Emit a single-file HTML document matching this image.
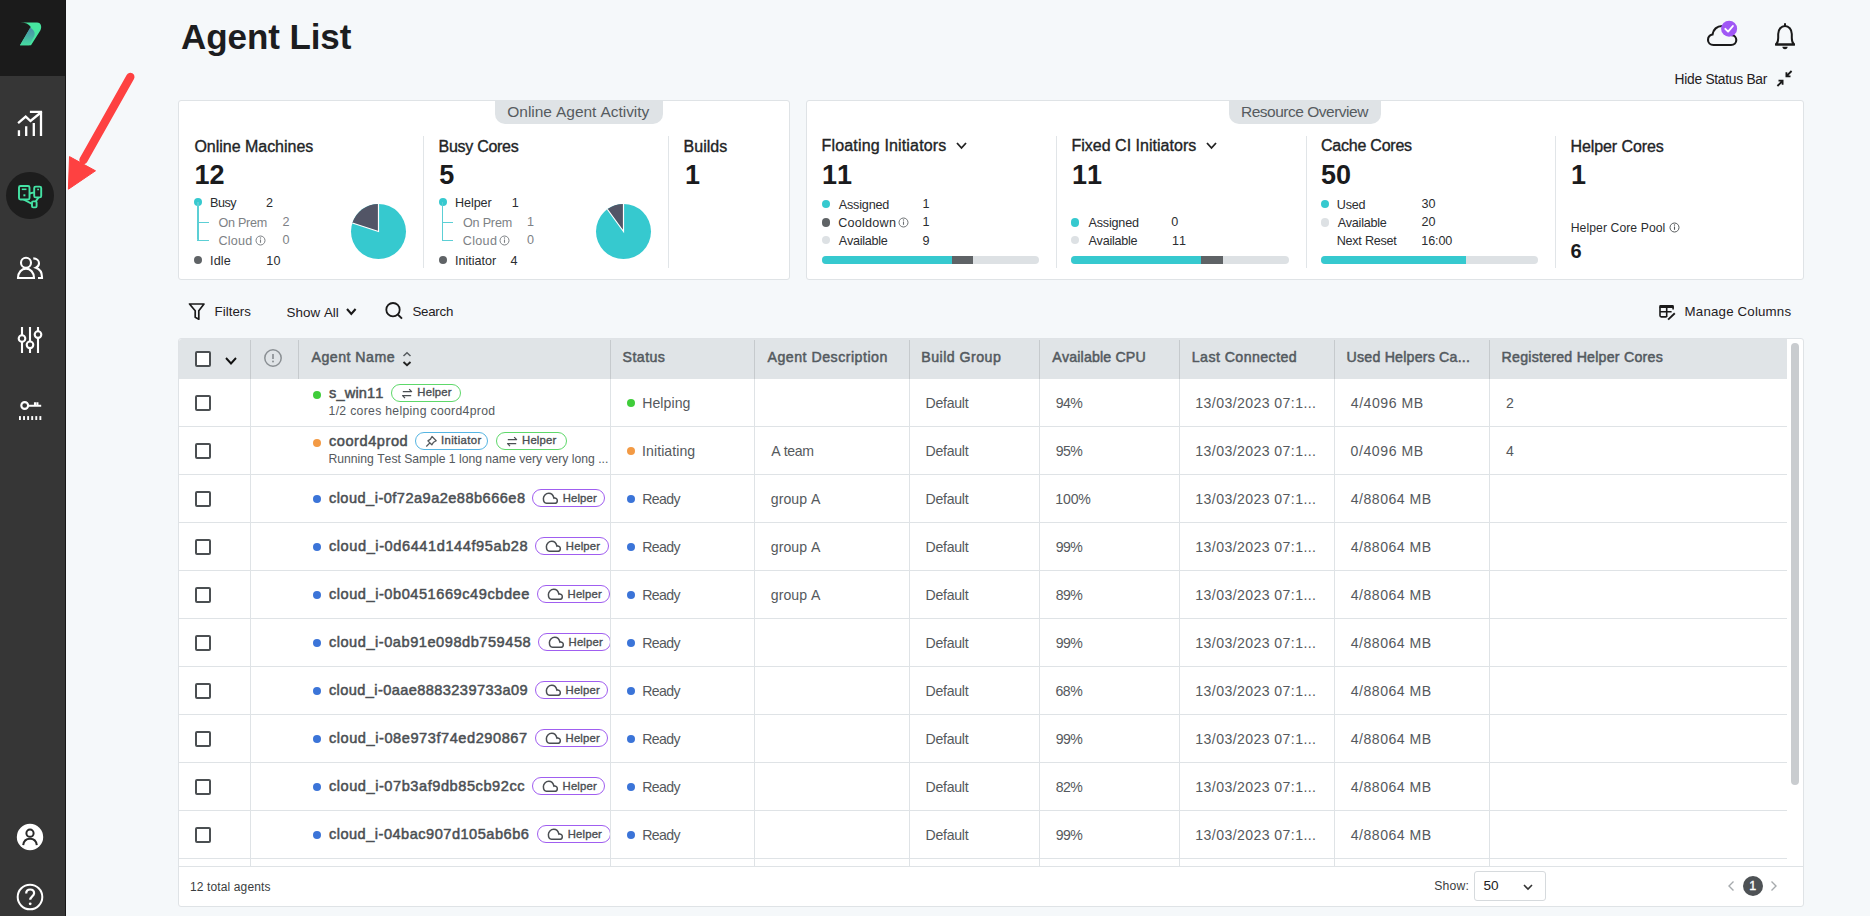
<!DOCTYPE html>
<html><head><meta charset="utf-8"><title>Agent List</title>
<style>
html,body{margin:0;padding:0;}
body{width:1870px;height:916px;position:relative;overflow:hidden;background:#f5f8fa;font-family:"Liberation Sans",sans-serif;}
.r{position:absolute;}
.med{-webkit-text-stroke:0.35px currentColor;}
.semi{-webkit-text-stroke:0.5px currentColor;}
.lt{}
.t{position:absolute;line-height:1;white-space:nowrap;font-kerning:none;font-variant-ligatures:none;}
svg.r{overflow:visible;}
</style></head><body>
<div class="r" style="left:0px;top:0px;width:66px;height:916px;background:#363636;"></div><div class="r" style="left:0px;top:0px;width:66px;height:76px;background:#1b1b1b;"></div><div class="r" style="left:65px;top:0px;width:1px;height:916px;background:#161616;"></div><svg class="r" style="left:17px;top:20px;" width="28" height="28" viewBox="0 0 28 28">
<defs><linearGradient id="lg" x1="0" y1="0" x2="0" y2="1">
<stop offset="0" stop-color="#4a8aa8"/><stop offset="0.5" stop-color="#47b0a5"/><stop offset="1" stop-color="#45dca0"/></linearGradient></defs>
<path d="M2.2 2.6 C8 2.4 11.5 3.6 13.8 7 L3 25.2 L14 25.2 L23.3 10.5 C25 7.8 24.5 2.6 20 2.6 Z" fill="#47e6a0"/>
<path d="M13.3 7.6 C16.8 10 18.6 13 17.2 16.2 L12.3 25.2 L3 25.2 Z" fill="url(#lg)"/>
</svg><svg class="r" style="left:15px;top:109px;" width="30" height="30" viewBox="0 0 30 30">
<g fill="none" stroke="#fff" stroke-width="2.3" stroke-linecap="butt" stroke-linejoin="miter">
<path d="M3.95 27 V21.2 M11.2 27 V17.3 M18.8 27 V14 M26 27 V2.9"/>
<path d="M3.1 14.2 L10.7 7.6 L15.5 12 L25.3 4 M14.9 2.9 H27.1"/>
</g></svg><div class="r" style="left:6.4px;top:171.6px;width:47.2px;height:47.2px;border-radius:50%;background:#1d1d1d;"></div><svg class="r" style="left:15px;top:182px;" width="30" height="30" viewBox="0 0 30 30">
<g fill="none" stroke="#45e3a5" stroke-width="1.9" stroke-linejoin="round">
<rect x="4" y="4" width="10.5" height="13.5" rx="1.5"/>
<rect x="19.2" y="4.6" width="7" height="10.8" rx="1.5"/>
<rect x="17" y="19.4" width="4.6" height="6" rx="1.2"/>
<path d="M14.5 11.5 L19.2 10.3 M8.5 17.5 L17 21.8 M23.5 15.4 L20.8 19.4"/>
<path d="M6.8 7.3 H11.5" stroke-width="1.6"/>
<path d="M22.2 7.6 H24" stroke-width="1.5"/>
</g>
<rect x="8.4" y="12.3" width="2" height="2" fill="#45e3a5"/>
</svg><svg class="r" style="left:15px;top:254px;" width="30" height="30" viewBox="0 0 30 30">
<g fill="none" stroke="#fff" stroke-width="2.1">
<circle cx="11" cy="8.8" r="5"/>
<path d="M3 24 C3 18.5 6.6 14.6 11 14.6 C15.4 14.6 19 18.5 19 24 Z"/>
<path d="M18.3 4.4 C21.5 4.4 24 6.3 24 9.2 C24 11.4 22.8 12.8 20.9 13.7 C24.6 15 27 18.6 27 23 V24 H23"/>
</g></svg><svg class="r" style="left:15px;top:325px;" width="30" height="30" viewBox="0 0 30 30">
<g fill="none" stroke="#fff" stroke-width="2.1">
<path d="M7 2 V10.2 M7 16.8 V28 M15 2 V16.5 M15 23.1 V28 M23 2 V6.3 M23 12.9 V28"/>
<circle cx="7" cy="13.5" r="3.3"/>
<circle cx="15" cy="19.8" r="3.3"/>
<circle cx="23" cy="9.6" r="3.3"/>
</g></svg><svg class="r" style="left:15px;top:398px;" width="30" height="26" viewBox="0 0 30 26">
<g fill="none" stroke="#fff" stroke-width="2.1">
<circle cx="9.7" cy="7.5" r="3.4"/>
<path d="M13 7.8 H26.2 M20 7.8 V4.3 M22.4 7.8 V4.3"/>
</g>
<g fill="#fff"><rect x="4.00" y="18.1" width="1.9" height="3.9"/><rect x="8.08" y="18.1" width="1.9" height="3.9"/><rect x="12.16" y="18.1" width="1.9" height="3.9"/><rect x="16.24" y="18.1" width="1.9" height="3.9"/><rect x="20.32" y="18.1" width="1.9" height="3.9"/><rect x="24.40" y="18.1" width="1.9" height="3.9"/></g></svg><svg class="r" style="left:15px;top:822px;" width="30" height="30" viewBox="0 0 30 30">
<circle cx="15" cy="15" r="13.2" fill="#fff"/>
<g fill="none" stroke="#2a2a2a" stroke-width="2">
<circle cx="15" cy="11.2" r="3.6"/>
<path d="M8.2 23.2 C8.7 19 11.5 16.8 15 16.8 C18.5 16.8 21.3 19 21.8 23.2"/>
</g></svg><svg class="r" style="left:15px;top:882px;" width="30" height="30" viewBox="0 0 30 30">
<circle cx="15" cy="15" r="12.3" fill="none" stroke="#fff" stroke-width="2"/>
<path d="M11.2 11.5 C11.2 9 13 7.5 15.2 7.5 C17.5 7.5 19.1 9 19.1 11.2 C19.1 14.2 15.2 14.5 15.2 17.8" fill="none" stroke="#fff" stroke-width="2.2"/>
<circle cx="15.2" cy="21.8" r="1.4" fill="#fff"/>
</svg><div class="r" style="left:66px;top:0px;width:1804px;height:916px;background:#f5f8fa;"></div><svg class="r" style="left:60px;top:70px;" width="80" height="130" viewBox="0 0 80 130">
<path d="M70.3 7 L23.5 90" stroke="#fe4141" stroke-width="8.4" stroke-linecap="round"/>
<path d="M8.4 119.2 L9.5 86.6 L35.5 100.8 Z" fill="#fe4141" stroke="#fe4141" stroke-width="1" stroke-linejoin="round"/>
</svg><div class="t " style="left:181.03px;top:18.67px;font-size:35px;color:#1c1d1f;font-weight:bold;letter-spacing:-0.078px;">Agent List</div><svg class="r" style="left:1700.8px;top:13.2px;" width="44" height="40" viewBox="0 0 44 40">
<path d="M12.5 32 H30 C33.2 32 35.3 29.8 35.3 27 C35.3 24.3 33.3 22.3 30.8 22.1 C30 16.8 26 13 21 13 C16 13 12.2 16.5 11.5 21.5 C8.8 22 7 24.3 7 27 C7 29.8 9.3 32 12.5 32 Z" fill="none" stroke="#1a1a1a" stroke-width="2.1"/>
<circle cx="28.1" cy="15.7" r="8" fill="#a057f5"/>
<path d="M24.3 15.8 L27.1 18.6 L31.9 13" fill="none" stroke="#fff" stroke-width="1.9" stroke-linecap="round" stroke-linejoin="round"/>
</svg><svg class="r" style="left:1772px;top:21px;" width="26" height="32" viewBox="0 0 26 32">
<path d="M4 23.5 C5.8 21.8 6.2 19.7 6.2 17 V13 C6.2 8.3 9.3 5 13 5 C16.7 5 19.8 8.3 19.8 13 V17 C19.8 19.7 20.2 21.8 22 23.5 Z" fill="none" stroke="#1a1a1a" stroke-width="2" stroke-linejoin="round"/>
<path d="M3 23.5 H23" stroke="#1a1a1a" stroke-width="2"/>
<path d="M13 2.2 V5" stroke="#1a1a1a" stroke-width="2"/>
<path d="M10.4 25.8 H15.6 A2.6 2.4 0 0 1 10.4 25.8 Z" fill="#1a1a1a"/>
</svg><div class="t " style="left:1674.57px;top:73.32px;font-size:13.8px;color:#1f2023;letter-spacing:-0.278px;">Hide Status Bar</div><svg class="r" style="left:1775px;top:69px;" width="20" height="20" viewBox="0 0 20 20">
<g fill="none" stroke="#1a1a1a" stroke-width="1.8">
<path d="M16.6 2 L11.6 7 M11.4 3.2 V7.3 H15.5"/>
<path d="M2.4 17 L7.4 12 M3.5 11.7 H7.6 V15.8"/>
</g></svg><div class="r" style="left:178px;top:100px;width:612px;height:180px;background:#fff;border:1px solid #dfe3e6;border-radius:3px;box-sizing:border-box;"></div><div class="r" style="left:806px;top:100px;width:998px;height:180px;background:#fff;border:1px solid #dfe3e6;border-radius:3px;box-sizing:border-box;"></div><div class="r" style="left:495px;top:100px;width:168px;height:24px;background:#dfe3e6;border-radius:0 0 10px 10px;"></div><div class="t " style="left:507.37px;top:104.48px;font-size:15.5px;color:#565b5f;letter-spacing:-0.057px;">Online Agent Activity</div><div class="r" style="left:1229px;top:100px;width:152px;height:24px;background:#dfe3e6;border-radius:0 0 10px 10px;"></div><div class="t " style="left:1241.03px;top:104.48px;font-size:15.5px;color:#565b5f;letter-spacing:-0.494px;">Resource Overview</div><div class="t med" style="left:194.44px;top:138.65px;font-size:16px;color:#222426;letter-spacing:-0.024px;">Online Machines</div><div class="t " style="left:194.50px;top:162.34px;font-size:27px;color:#1a1b1d;font-weight:bold;">12</div><div class="r" style="left:193.80px;top:198.00px;width:8.4px;height:8.4px;border-radius:50%;background:#36c9cf;"></div><div class="r" style="left:197.4px;top:202px;width:1.4px;height:39px;background:#5ccfd5;border-radius:0 0 0 2px;"></div><div class="r" style="left:197.4px;top:222px;width:11.3px;height:1.4px;background:#5ccfd5;"></div><div class="r" style="left:197.4px;top:239.8px;width:11.3px;height:1.4px;background:#5ccfd5;"></div><div class="t " style="left:210.07px;top:196.93px;font-size:12.6px;color:#2b2d30;letter-spacing:-0.518px;">Busy</div><div class="t " style="left:266.00px;top:196.53px;font-size:12.6px;color:#2b2d30;">2</div><div class="t " style="left:218.60px;top:216.63px;font-size:12.6px;color:#7d8185;letter-spacing:-0.297px;">On Prem</div><div class="t " style="left:282.40px;top:216.33px;font-size:12.6px;color:#7d8185;">2</div><div class="t " style="left:218.56px;top:234.63px;font-size:12.6px;color:#7d8185;letter-spacing:0.208px;">Cloud</div><svg class="r" style="left:254.5px;top:234.5px;" width="11" height="11" viewBox="0 0 11 11"><circle cx="5.5" cy="5.5" r="4.5" fill="none" stroke="#7d8185" stroke-width="1"/>
<path d="M5.5 4.5 V7.800000000000001" stroke="#7d8185" stroke-width="1.1"/><circle cx="5.5" cy="3.0" r="0.7" fill="#7d8185"/></svg><div class="t " style="left:282.40px;top:234.33px;font-size:12.6px;color:#7d8185;">0</div><div class="r" style="left:193.80px;top:256.10px;width:8.4px;height:8.4px;border-radius:50%;background:#5f6366;"></div><div class="t " style="left:209.94px;top:254.93px;font-size:12.6px;color:#2b2d30;letter-spacing:0.203px;">Idle</div><div class="t " style="left:266.24px;top:254.53px;font-size:12.6px;color:#2b2d30;letter-spacing:0.137px;">10</div><div class="r" style="left:423px;top:136px;width:1px;height:132px;background:#e1e5e8;"></div><svg class="r" style="left:349.0px;top:201.8px;" width="59.0" height="59.0" viewBox="0 0 59.0 59.0">
<g transform="translate(-349.0,-201.8)">
<circle cx="378.5" cy="231.3" r="27.5" fill="#36c9cf"/>
<path d="M378.5 231.3 L378.5 203.8 A27.5 27.5 0 0 0 352.35 222.80 Z" fill="#525566"/>
<path d="M352.35 222.80 L378.5 231.3 L378.5 203.8" fill="none" stroke="#fff" stroke-width="1.2"/>
</g></svg><div class="t med" style="left:438.59px;top:138.65px;font-size:16px;color:#222426;letter-spacing:-0.289px;">Busy Cores</div><div class="t " style="left:439.20px;top:162.34px;font-size:27px;color:#1a1b1d;font-weight:bold;">5</div><div class="r" style="left:438.50px;top:198.00px;width:8.4px;height:8.4px;border-radius:50%;background:#36c9cf;"></div><div class="r" style="left:442.1px;top:202px;width:1.4px;height:39px;background:#5ccfd5;border-radius:0 0 0 2px;"></div><div class="r" style="left:442.1px;top:222px;width:11.3px;height:1.4px;background:#5ccfd5;"></div><div class="r" style="left:442.1px;top:239.8px;width:11.3px;height:1.4px;background:#5ccfd5;"></div><div class="t " style="left:455.07px;top:196.93px;font-size:12.6px;color:#2b2d30;letter-spacing:-0.095px;">Helper</div><div class="t " style="left:511.70px;top:196.53px;font-size:12.6px;color:#2b2d30;">1</div><div class="t " style="left:462.90px;top:216.63px;font-size:12.6px;color:#7d8185;letter-spacing:-0.181px;">On Prem</div><div class="t " style="left:527.00px;top:216.33px;font-size:12.6px;color:#7d8185;">1</div><div class="t " style="left:462.86px;top:234.63px;font-size:12.6px;color:#7d8185;letter-spacing:0.283px;">Cloud</div><svg class="r" style="left:499.2px;top:234.5px;" width="11" height="11" viewBox="0 0 11 11"><circle cx="5.5" cy="5.5" r="4.5" fill="none" stroke="#7d8185" stroke-width="1"/>
<path d="M5.5 4.5 V7.800000000000001" stroke="#7d8185" stroke-width="1.1"/><circle cx="5.5" cy="3.0" r="0.7" fill="#7d8185"/></svg><div class="t " style="left:527.00px;top:234.33px;font-size:12.6px;color:#7d8185;">0</div><div class="r" style="left:438.50px;top:256.10px;width:8.4px;height:8.4px;border-radius:50%;background:#5f6366;"></div><div class="t " style="left:454.94px;top:254.93px;font-size:12.6px;color:#2b2d30;letter-spacing:0.007px;">Initiator</div><div class="t " style="left:510.60px;top:254.53px;font-size:12.6px;color:#2b2d30;">4</div><div class="r" style="left:668px;top:136px;width:1px;height:132px;background:#e1e5e8;"></div><svg class="r" style="left:593.6px;top:201.8px;" width="59.0" height="59.0" viewBox="0 0 59.0 59.0">
<g transform="translate(-593.6,-201.8)">
<circle cx="623.1" cy="231.3" r="27.5" fill="#36c9cf"/>
<path d="M623.1 231.3 L623.1 203.8 A27.5 27.5 0 0 0 606.94 209.05 Z" fill="#525566"/>
<path d="M606.94 209.05 L623.1 231.3 L623.1 203.8" fill="none" stroke="#fff" stroke-width="1.2"/>
</g></svg><div class="t med" style="left:683.59px;top:138.65px;font-size:16px;color:#222426;letter-spacing:0.022px;">Builds</div><div class="t " style="left:685.00px;top:162.34px;font-size:27px;color:#1a1b1d;font-weight:bold;">1</div><div class="t med" style="left:821.59px;top:138.15px;font-size:16px;color:#222426;letter-spacing:0.159px;">Floating Initiators</div><svg class="r" style="left:956px;top:142px;" width="11" height="8" viewBox="0 0 11 8"><path d="M1 1 L5.5 6 L10 1" fill="none" stroke="#222" stroke-width="1.8"/></svg><div class="t " style="left:822.00px;top:162.34px;font-size:27px;color:#1a1b1d;font-weight:bold;">11</div><div class="r" style="left:821.70px;top:199.80px;width:8.4px;height:8.4px;border-radius:50%;background:#36c9cf;"></div><div class="t " style="left:838.78px;top:198.53px;font-size:12.6px;color:#2b2d30;letter-spacing:-0.185px;">Assigned</div><div class="t " style="left:922.40px;top:198.13px;font-size:12.6px;color:#2b2d30;">1</div><div class="r" style="left:821.70px;top:218.20px;width:8.4px;height:8.4px;border-radius:50%;background:#5f6366;"></div><div class="t " style="left:838.16px;top:216.73px;font-size:12.6px;color:#2b2d30;letter-spacing:0.246px;">Cooldown</div><svg class="r" style="left:898.4px;top:216.8px;" width="11" height="11" viewBox="0 0 11 11"><circle cx="5.5" cy="5.5" r="4.5" fill="none" stroke="#6e7275" stroke-width="1"/>
<path d="M5.5 4.5 V7.800000000000001" stroke="#6e7275" stroke-width="1.1"/><circle cx="5.5" cy="3.0" r="0.7" fill="#6e7275"/></svg><div class="t " style="left:922.40px;top:216.33px;font-size:12.6px;color:#2b2d30;">1</div><div class="r" style="left:821.70px;top:236.00px;width:8.4px;height:8.4px;border-radius:50%;background:#dde1e4;"></div><div class="t " style="left:838.78px;top:234.93px;font-size:12.6px;color:#2b2d30;letter-spacing:-0.256px;">Available</div><div class="t " style="left:922.40px;top:234.53px;font-size:12.6px;color:#2b2d30;">9</div><div class="r" style="left:821.7px;top:256.3px;width:217.5px;height:8px;border-radius:4px;overflow:hidden;background:#dde1e4;"><div style="position:absolute;left:0.0px;top:0;width:130.0999999999999px;height:100%;background:#36c9cf;"></div><div style="position:absolute;left:130.0999999999999px;top:0;width:21.200000000000045px;height:100%;background:#5f6366;"></div></div><div class="r" style="left:1055.8px;top:136px;width:1px;height:132px;background:#e1e5e8;"></div><div class="t med" style="left:1071.39px;top:138.15px;font-size:16px;color:#222426;letter-spacing:0.023px;">Fixed CI Initiators</div><svg class="r" style="left:1205.5px;top:142px;" width="11" height="8" viewBox="0 0 11 8"><path d="M1 1 L5.5 6 L10 1" fill="none" stroke="#222" stroke-width="1.8"/></svg><div class="t " style="left:1072.00px;top:162.34px;font-size:27px;color:#1a1b1d;font-weight:bold;">11</div><div class="r" style="left:1071.10px;top:218.20px;width:8.4px;height:8.4px;border-radius:50%;background:#36c9cf;"></div><div class="t " style="left:1088.48px;top:216.73px;font-size:12.6px;color:#2b2d30;letter-spacing:-0.185px;">Assigned</div><div class="t " style="left:1171.20px;top:216.33px;font-size:12.6px;color:#2b2d30;">0</div><div class="r" style="left:1071.10px;top:236.00px;width:8.4px;height:8.4px;border-radius:50%;background:#dde1e4;"></div><div class="t " style="left:1088.48px;top:234.93px;font-size:12.6px;color:#2b2d30;letter-spacing:-0.256px;">Available</div><div class="t " style="left:1172.00px;top:234.53px;font-size:12.6px;color:#2b2d30;">11</div><div class="r" style="left:1071.1px;top:256.3px;width:217.5px;height:8px;border-radius:4px;overflow:hidden;background:#dde1e4;"><div style="position:absolute;left:0.0px;top:0;width:130.20000000000005px;height:100%;background:#36c9cf;"></div><div style="position:absolute;left:130.20000000000005px;top:0;width:21.90000000000009px;height:100%;background:#5f6366;"></div></div><div class="r" style="left:1305.6px;top:136px;width:1px;height:132px;background:#e1e5e8;"></div><div class="t med" style="left:1320.99px;top:138.15px;font-size:16px;color:#222426;letter-spacing:-0.228px;">Cache Cores</div><div class="t " style="left:1321.00px;top:162.34px;font-size:27px;color:#1a1b1d;font-weight:bold;">50</div><div class="r" style="left:1320.80px;top:199.80px;width:8.4px;height:8.4px;border-radius:50%;background:#36c9cf;"></div><div class="t " style="left:1336.73px;top:198.53px;font-size:12.6px;color:#2b2d30;letter-spacing:-0.177px;">Used</div><div class="t " style="left:1421.50px;top:198.13px;font-size:12.6px;color:#2b2d30;">30</div><div class="r" style="left:1320.80px;top:218.20px;width:8.4px;height:8.4px;border-radius:50%;background:#dde1e4;"></div><div class="t " style="left:1337.68px;top:216.73px;font-size:12.6px;color:#2b2d30;letter-spacing:-0.256px;">Available</div><div class="t " style="left:1421.50px;top:216.33px;font-size:12.6px;color:#2b2d30;">20</div><div class="t " style="left:1336.67px;top:234.93px;font-size:12.6px;color:#2b2d30;letter-spacing:-0.233px;">Next Reset</div><div class="t " style="left:1421.24px;top:234.53px;font-size:12.6px;color:#2b2d30;letter-spacing:-0.095px;">16:00</div><div class="r" style="left:1320.9px;top:256.3px;width:216.89999999999986px;height:8px;border-radius:4px;overflow:hidden;background:#dde1e4;"><div style="position:absolute;left:0.0px;top:0;width:145.0999999999999px;height:100%;background:#36c9cf;"></div></div><div class="r" style="left:1554.7px;top:136px;width:1px;height:132px;background:#e1e5e8;"></div><div class="t med" style="left:1570.49px;top:139.05px;font-size:16px;color:#222426;letter-spacing:-0.088px;">Helper Cores</div><div class="t " style="left:1571.00px;top:162.34px;font-size:27px;color:#1a1b1d;font-weight:bold;">1</div><div class="t " style="left:1570.70px;top:222.07px;font-size:12.2px;color:#2b2d30;letter-spacing:0.076px;">Helper Core Pool</div><svg class="r" style="left:1669px;top:222.3px;" width="11" height="11" viewBox="0 0 11 11"><circle cx="5.5" cy="5.5" r="4.5" fill="none" stroke="#55595c" stroke-width="1"/>
<path d="M5.5 4.5 V7.800000000000001" stroke="#55595c" stroke-width="1.1"/><circle cx="5.5" cy="3.0" r="0.7" fill="#55595c"/></svg><div class="t " style="left:1570.50px;top:240.77px;font-size:20px;color:#1a1b1d;font-weight:bold;">6</div><svg class="r" style="left:187px;top:301px;" width="20" height="21" viewBox="0 0 20 21"><path d="M2.5 3 H17 L11.8 9.8 V18.2 L8.2 16.3 V9.8 Z" fill="none" stroke="#1a1a1a" stroke-width="1.7" stroke-linejoin="round"/></svg><div class="t " style="left:214.61px;top:305.04px;font-size:13.3px;color:#1f2023;letter-spacing:0.011px;">Filters</div><div class="t " style="left:286.59px;top:306.15px;font-size:13.4px;color:#1f2023;letter-spacing:0.024px;">Show All</div><svg class="r" style="left:346.3px;top:307.8px;" width="10.6" height="8" viewBox="0 0 10.6 8"><path d="M1 1 L5.3 6 L9.6 1" fill="none" stroke="#1a1a1a" stroke-width="2.1"/></svg><svg class="r" style="left:383px;top:301px;" width="22" height="22" viewBox="0 0 22 22"><circle cx="10" cy="8.7" r="6.7" fill="none" stroke="#1a1a1a" stroke-width="1.8"/><path d="M14.8 13.5 L19 17.7" stroke="#1a1a1a" stroke-width="1.9"/></svg><div class="t " style="left:412.40px;top:305.04px;font-size:13.3px;color:#1f2023;letter-spacing:-0.235px;">Search</div><svg class="r" style="left:1656px;top:302px;" width="22" height="20" viewBox="0 0 22 20">
<g fill="none" stroke="#1a1a1a" stroke-width="1.6">
<path d="M10.7 14.9 H5.3 Q4 14.9 4 13.6 V5 M17.1 5 V7.6 M4 9.8 H15.6 M10.7 5.5 V14.9"/>
</g>
<rect x="3.2" y="3.1" width="14.7" height="2.9" rx="1.2" fill="#1a1a1a"/>
<path d="M18.8 11.3 L12.1 17.6" stroke="#1a1a1a" stroke-width="1.9"/>
</svg><div class="t " style="left:1684.61px;top:305.04px;font-size:13.3px;color:#1f2023;letter-spacing:0.172px;">Manage Columns</div><div class="r" style="left:178px;top:338px;width:1626px;height:569px;background:#fff;border:1px solid #dfe3e6;border-radius:3px;box-sizing:border-box;"></div><div class="r" style="left:179px;top:339px;width:1608px;height:40px;background:#e0e4e7;border-radius:3px 0 0 0;"></div><div class="r" style="left:250px;top:340px;width:1px;height:39px;background:#c6cacd;"></div><div class="r" style="left:298px;top:340px;width:1px;height:39px;background:#c6cacd;"></div><div class="r" style="left:610px;top:340px;width:1px;height:39px;background:#c6cacd;"></div><div class="r" style="left:754px;top:340px;width:1px;height:39px;background:#c6cacd;"></div><div class="r" style="left:909px;top:340px;width:1px;height:39px;background:#c6cacd;"></div><div class="r" style="left:1039px;top:340px;width:1px;height:39px;background:#c6cacd;"></div><div class="r" style="left:1179px;top:340px;width:1px;height:39px;background:#c6cacd;"></div><div class="r" style="left:1334px;top:340px;width:1px;height:39px;background:#c6cacd;"></div><div class="r" style="left:1489px;top:340px;width:1px;height:39px;background:#c6cacd;"></div><div class="r" style="left:195.3px;top:351.2px;width:15.5px;height:15.5px;border:2px solid #4b4f52;border-radius:2px;box-sizing:border-box;background:#fff;"></div><svg class="r" style="left:224.5px;top:356.5px;" width="12" height="8.5" viewBox="0 0 12 8.5"><path d="M1 1 L6.0 6.5 L11 1" fill="none" stroke="#111" stroke-width="1.9"/></svg><svg class="r" style="left:263px;top:349px;" width="21" height="19" viewBox="0 0 21 19"><circle cx="10" cy="9" r="8.2" fill="none" stroke="#8b9094" stroke-width="1.5"/><path d="M10 5 V10" stroke="#8b9094" stroke-width="1.7"/><circle cx="10" cy="12.6" r="1" fill="#8b9094"/></svg><div class="t semi" style="left:311.47px;top:350.48px;font-size:14.2px;color:#545a5f;letter-spacing:0.481px;">Agent Name</div><svg class="r" style="left:400px;top:350px;" width="14" height="18" viewBox="0 0 14 18"><path d="M3.5 6 L7 2.8 L10.5 6" fill="none" stroke="#555a5e" stroke-width="1.5"/><path d="M3.5 12 L7 15.2 L10.5 12" fill="none" stroke="#222" stroke-width="1.9"/></svg><div class="t semi" style="left:622.56px;top:350.28px;font-size:14.2px;color:#545a5f;letter-spacing:0.44px;">Status</div><div class="t semi" style="left:767.47px;top:350.28px;font-size:14.2px;color:#545a5f;letter-spacing:0.492px;">Agent Description</div><div class="t semi" style="left:921.34px;top:350.28px;font-size:14.2px;color:#545a5f;letter-spacing:0.457px;">Build Group</div><div class="t semi" style="left:1052.37px;top:350.28px;font-size:14.2px;color:#545a5f;letter-spacing:0.156px;">Available CPU</div><div class="t semi" style="left:1191.74px;top:350.28px;font-size:14.2px;color:#545a5f;letter-spacing:0.432px;">Last Connected</div><div class="t semi" style="left:1346.60px;top:350.28px;font-size:14.2px;color:#545a5f;letter-spacing:0.202px;">Used Helpers Ca...</div><div class="t semi" style="left:1501.54px;top:350.28px;font-size:14.2px;color:#545a5f;letter-spacing:0.232px;">Registered Helper Cores</div><div class="r" style="left:1791px;top:343px;width:8px;height:442px;background:#c9cccf;border-radius:4px;"></div><div class="r" style="left:179px;top:379px;width:1608px;height:487px;overflow:hidden;"><div class="r" style="left:0px;top:47px;width:1608px;height:1px;background:#dfe3e6;"></div><div class="r" style="left:71px;top:0px;width:1px;height:47px;background:#dfe3e6;"></div><div class="r" style="left:431px;top:0px;width:1px;height:47px;background:#dfe3e6;"></div><div class="r" style="left:575px;top:0px;width:1px;height:47px;background:#dfe3e6;"></div><div class="r" style="left:730px;top:0px;width:1px;height:47px;background:#dfe3e6;"></div><div class="r" style="left:860px;top:0px;width:1px;height:47px;background:#dfe3e6;"></div><div class="r" style="left:1000px;top:0px;width:1px;height:47px;background:#dfe3e6;"></div><div class="r" style="left:1155px;top:0px;width:1px;height:47px;background:#dfe3e6;"></div><div class="r" style="left:1310px;top:0px;width:1px;height:47px;background:#dfe3e6;"></div><div class="r" style="left:0px;top:95px;width:1608px;height:1px;background:#dfe3e6;"></div><div class="r" style="left:71px;top:48px;width:1px;height:47px;background:#dfe3e6;"></div><div class="r" style="left:431px;top:48px;width:1px;height:47px;background:#dfe3e6;"></div><div class="r" style="left:575px;top:48px;width:1px;height:47px;background:#dfe3e6;"></div><div class="r" style="left:730px;top:48px;width:1px;height:47px;background:#dfe3e6;"></div><div class="r" style="left:860px;top:48px;width:1px;height:47px;background:#dfe3e6;"></div><div class="r" style="left:1000px;top:48px;width:1px;height:47px;background:#dfe3e6;"></div><div class="r" style="left:1155px;top:48px;width:1px;height:47px;background:#dfe3e6;"></div><div class="r" style="left:1310px;top:48px;width:1px;height:47px;background:#dfe3e6;"></div><div class="r" style="left:0px;top:143px;width:1608px;height:1px;background:#dfe3e6;"></div><div class="r" style="left:71px;top:96px;width:1px;height:47px;background:#dfe3e6;"></div><div class="r" style="left:431px;top:96px;width:1px;height:47px;background:#dfe3e6;"></div><div class="r" style="left:575px;top:96px;width:1px;height:47px;background:#dfe3e6;"></div><div class="r" style="left:730px;top:96px;width:1px;height:47px;background:#dfe3e6;"></div><div class="r" style="left:860px;top:96px;width:1px;height:47px;background:#dfe3e6;"></div><div class="r" style="left:1000px;top:96px;width:1px;height:47px;background:#dfe3e6;"></div><div class="r" style="left:1155px;top:96px;width:1px;height:47px;background:#dfe3e6;"></div><div class="r" style="left:1310px;top:96px;width:1px;height:47px;background:#dfe3e6;"></div><div class="r" style="left:0px;top:191px;width:1608px;height:1px;background:#dfe3e6;"></div><div class="r" style="left:71px;top:144px;width:1px;height:47px;background:#dfe3e6;"></div><div class="r" style="left:431px;top:144px;width:1px;height:47px;background:#dfe3e6;"></div><div class="r" style="left:575px;top:144px;width:1px;height:47px;background:#dfe3e6;"></div><div class="r" style="left:730px;top:144px;width:1px;height:47px;background:#dfe3e6;"></div><div class="r" style="left:860px;top:144px;width:1px;height:47px;background:#dfe3e6;"></div><div class="r" style="left:1000px;top:144px;width:1px;height:47px;background:#dfe3e6;"></div><div class="r" style="left:1155px;top:144px;width:1px;height:47px;background:#dfe3e6;"></div><div class="r" style="left:1310px;top:144px;width:1px;height:47px;background:#dfe3e6;"></div><div class="r" style="left:0px;top:239px;width:1608px;height:1px;background:#dfe3e6;"></div><div class="r" style="left:71px;top:192px;width:1px;height:47px;background:#dfe3e6;"></div><div class="r" style="left:431px;top:192px;width:1px;height:47px;background:#dfe3e6;"></div><div class="r" style="left:575px;top:192px;width:1px;height:47px;background:#dfe3e6;"></div><div class="r" style="left:730px;top:192px;width:1px;height:47px;background:#dfe3e6;"></div><div class="r" style="left:860px;top:192px;width:1px;height:47px;background:#dfe3e6;"></div><div class="r" style="left:1000px;top:192px;width:1px;height:47px;background:#dfe3e6;"></div><div class="r" style="left:1155px;top:192px;width:1px;height:47px;background:#dfe3e6;"></div><div class="r" style="left:1310px;top:192px;width:1px;height:47px;background:#dfe3e6;"></div><div class="r" style="left:0px;top:287px;width:1608px;height:1px;background:#dfe3e6;"></div><div class="r" style="left:71px;top:240px;width:1px;height:47px;background:#dfe3e6;"></div><div class="r" style="left:431px;top:240px;width:1px;height:47px;background:#dfe3e6;"></div><div class="r" style="left:575px;top:240px;width:1px;height:47px;background:#dfe3e6;"></div><div class="r" style="left:730px;top:240px;width:1px;height:47px;background:#dfe3e6;"></div><div class="r" style="left:860px;top:240px;width:1px;height:47px;background:#dfe3e6;"></div><div class="r" style="left:1000px;top:240px;width:1px;height:47px;background:#dfe3e6;"></div><div class="r" style="left:1155px;top:240px;width:1px;height:47px;background:#dfe3e6;"></div><div class="r" style="left:1310px;top:240px;width:1px;height:47px;background:#dfe3e6;"></div><div class="r" style="left:0px;top:335px;width:1608px;height:1px;background:#dfe3e6;"></div><div class="r" style="left:71px;top:288px;width:1px;height:47px;background:#dfe3e6;"></div><div class="r" style="left:431px;top:288px;width:1px;height:47px;background:#dfe3e6;"></div><div class="r" style="left:575px;top:288px;width:1px;height:47px;background:#dfe3e6;"></div><div class="r" style="left:730px;top:288px;width:1px;height:47px;background:#dfe3e6;"></div><div class="r" style="left:860px;top:288px;width:1px;height:47px;background:#dfe3e6;"></div><div class="r" style="left:1000px;top:288px;width:1px;height:47px;background:#dfe3e6;"></div><div class="r" style="left:1155px;top:288px;width:1px;height:47px;background:#dfe3e6;"></div><div class="r" style="left:1310px;top:288px;width:1px;height:47px;background:#dfe3e6;"></div><div class="r" style="left:0px;top:383px;width:1608px;height:1px;background:#dfe3e6;"></div><div class="r" style="left:71px;top:336px;width:1px;height:47px;background:#dfe3e6;"></div><div class="r" style="left:431px;top:336px;width:1px;height:47px;background:#dfe3e6;"></div><div class="r" style="left:575px;top:336px;width:1px;height:47px;background:#dfe3e6;"></div><div class="r" style="left:730px;top:336px;width:1px;height:47px;background:#dfe3e6;"></div><div class="r" style="left:860px;top:336px;width:1px;height:47px;background:#dfe3e6;"></div><div class="r" style="left:1000px;top:336px;width:1px;height:47px;background:#dfe3e6;"></div><div class="r" style="left:1155px;top:336px;width:1px;height:47px;background:#dfe3e6;"></div><div class="r" style="left:1310px;top:336px;width:1px;height:47px;background:#dfe3e6;"></div><div class="r" style="left:0px;top:431px;width:1608px;height:1px;background:#dfe3e6;"></div><div class="r" style="left:71px;top:384px;width:1px;height:47px;background:#dfe3e6;"></div><div class="r" style="left:431px;top:384px;width:1px;height:47px;background:#dfe3e6;"></div><div class="r" style="left:575px;top:384px;width:1px;height:47px;background:#dfe3e6;"></div><div class="r" style="left:730px;top:384px;width:1px;height:47px;background:#dfe3e6;"></div><div class="r" style="left:860px;top:384px;width:1px;height:47px;background:#dfe3e6;"></div><div class="r" style="left:1000px;top:384px;width:1px;height:47px;background:#dfe3e6;"></div><div class="r" style="left:1155px;top:384px;width:1px;height:47px;background:#dfe3e6;"></div><div class="r" style="left:1310px;top:384px;width:1px;height:47px;background:#dfe3e6;"></div><div class="r" style="left:0px;top:479px;width:1608px;height:1px;background:#dfe3e6;"></div><div class="r" style="left:71px;top:432px;width:1px;height:47px;background:#dfe3e6;"></div><div class="r" style="left:431px;top:432px;width:1px;height:47px;background:#dfe3e6;"></div><div class="r" style="left:575px;top:432px;width:1px;height:47px;background:#dfe3e6;"></div><div class="r" style="left:730px;top:432px;width:1px;height:47px;background:#dfe3e6;"></div><div class="r" style="left:860px;top:432px;width:1px;height:47px;background:#dfe3e6;"></div><div class="r" style="left:1000px;top:432px;width:1px;height:47px;background:#dfe3e6;"></div><div class="r" style="left:1155px;top:432px;width:1px;height:47px;background:#dfe3e6;"></div><div class="r" style="left:1310px;top:432px;width:1px;height:47px;background:#dfe3e6;"></div><div class="r" style="left:0px;top:527px;width:1608px;height:1px;background:#dfe3e6;"></div><div class="r" style="left:71px;top:480px;width:1px;height:47px;background:#dfe3e6;"></div><div class="r" style="left:431px;top:480px;width:1px;height:47px;background:#dfe3e6;"></div><div class="r" style="left:575px;top:480px;width:1px;height:47px;background:#dfe3e6;"></div><div class="r" style="left:730px;top:480px;width:1px;height:47px;background:#dfe3e6;"></div><div class="r" style="left:860px;top:480px;width:1px;height:47px;background:#dfe3e6;"></div><div class="r" style="left:1000px;top:480px;width:1px;height:47px;background:#dfe3e6;"></div><div class="r" style="left:1155px;top:480px;width:1px;height:47px;background:#dfe3e6;"></div><div class="r" style="left:1310px;top:480px;width:1px;height:47px;background:#dfe3e6;"></div><div class="r" style="left:16.30000000000001px;top:16.0px;width:15.5px;height:15.5px;border:2px solid #4b4f52;border-radius:2px;box-sizing:border-box;"></div><div class="r" style="left:447.70px;top:19.90px;width:8.2px;height:8.2px;border-radius:50%;background:#3fcd3a;"></div><div class="t lt" style="left:463.24px;top:17.06px;font-size:14.1px;color:#55595d;letter-spacing:0.058px;">Helping</div><div class="t lt" style="left:746.54px;top:17.06px;font-size:14.1px;color:#55595d;letter-spacing:-0.253px;">Default</div><div class="t lt" style="left:876.64px;top:17.06px;font-size:14.1px;color:#55595d;letter-spacing:-0.579px;">94%</div><div class="t lt" style="left:1016.33px;top:17.06px;font-size:14.1px;color:#55595d;letter-spacing:0.411px;">13/03/2023 07:1...</div><div class="t lt" style="left:1171.78px;top:17.06px;font-size:14.1px;color:#55595d;letter-spacing:0.534px;">4/4096 MB</div><div class="t lt" style="left:1327.00px;top:17.06px;font-size:14.1px;color:#55595d;">2</div><div class="r" style="left:120px;top:0px;width:311px;height:47px;overflow:hidden;"><div class="r" style="left:13.70px;top:11.90px;width:8.2px;height:8.2px;border-radius:50%;background:#3fcd3a;"></div><div class="t semi" style="left:30.09px;top:7.34px;font-size:14.6px;color:#4b4f53;letter-spacing:0.142px;">s_win11</div><div class="t lt" style="left:29.57px;top:25.77px;font-size:12.2px;color:#55595d;letter-spacing:0.318px;">1/2 cores helping coord4prod</div><div class="r" style="left:92.30px;top:5.10px;width:69.6px;height:17.6px;border:1px solid #5ed86a;border-radius:9px;box-sizing:border-box;"></div><svg class="r" style="left:101.80000000000001px;top:8.300000000000022px;" width="16" height="13" viewBox="0 0 16 13"><path d="M1.8 4.6 H10.6 L8.2 2.1 M10.2 8.6 H1.6 L4 11.1" fill="none" stroke="#4a4e52" stroke-width="1.3" stroke-linejoin="round"/></svg><div class="t med" style="left:118.37px;top:8.43px;font-size:11.3px;color:#4a4e52;letter-spacing:0.165px;">Helper</div></div><div class="r" style="left:16.30000000000001px;top:64.0px;width:15.5px;height:15.5px;border:2px solid #4b4f52;border-radius:2px;box-sizing:border-box;"></div><div class="r" style="left:447.70px;top:67.90px;width:8.2px;height:8.2px;border-radius:50%;background:#f39a44;"></div><div class="t lt" style="left:463.10px;top:65.06px;font-size:14.1px;color:#55595d;letter-spacing:0.066px;">Initiating</div><div class="t lt" style="left:592.37px;top:65.06px;font-size:14.1px;color:#55595d;letter-spacing:-0.422px;">A team</div><div class="t lt" style="left:746.54px;top:65.06px;font-size:14.1px;color:#55595d;letter-spacing:-0.253px;">Default</div><div class="t lt" style="left:876.64px;top:65.06px;font-size:14.1px;color:#55595d;letter-spacing:-0.579px;">95%</div><div class="t lt" style="left:1016.33px;top:65.06px;font-size:14.1px;color:#55595d;letter-spacing:0.411px;">13/03/2023 07:1...</div><div class="t lt" style="left:1171.55px;top:65.06px;font-size:14.1px;color:#55595d;letter-spacing:0.563px;">0/4096 MB</div><div class="t lt" style="left:1327.00px;top:65.06px;font-size:14.1px;color:#55595d;">4</div><div class="r" style="left:120px;top:48px;width:311px;height:47px;overflow:hidden;"><div class="r" style="left:13.70px;top:11.90px;width:8.2px;height:8.2px;border-radius:50%;background:#f39a44;"></div><div class="t semi" style="left:29.88px;top:7.34px;font-size:14.6px;color:#4b4f53;letter-spacing:0.555px;">coord4prod</div><div class="t lt" style="left:29.50px;top:25.77px;font-size:12.2px;color:#55595d;letter-spacing:-0.013px;">Running Test Sample 1 long name very very long ...</div><div class="r" style="left:116.00px;top:5.10px;width:72.6px;height:17.6px;border:1px solid #55b5e2;border-radius:9px;box-sizing:border-box;"></div><svg class="r" style="left:125.5px;top:8.300000000000022px;" width="16" height="13" viewBox="0 0 16 13"><path d="M7 1.5 L11.2 5.7 L8.6 7.2 L6.8 9.8 L2.9 5.9 L5.5 4.1 Z M4.9 7.9 L1.3 11.5" fill="none" stroke="#55595c" stroke-width="1.3" stroke-linejoin="round"/></svg><div class="t med" style="left:141.96px;top:8.43px;font-size:11.3px;color:#4a4e52;letter-spacing:0.409px;">Initiator</div><div class="r" style="left:197.00px;top:5.10px;width:70.5px;height:17.6px;border:1px solid #5ed86a;border-radius:9px;box-sizing:border-box;"></div><svg class="r" style="left:206.5px;top:8.300000000000022px;" width="16" height="13" viewBox="0 0 16 13"><path d="M1.8 4.6 H10.6 L8.2 2.1 M10.2 8.6 H1.6 L4 11.1" fill="none" stroke="#4a4e52" stroke-width="1.3" stroke-linejoin="round"/></svg><div class="t med" style="left:223.07px;top:8.43px;font-size:11.3px;color:#4a4e52;letter-spacing:0.165px;">Helper</div></div><div class="r" style="left:16.30000000000001px;top:112.0px;width:15.5px;height:15.5px;border:2px solid #4b4f52;border-radius:2px;box-sizing:border-box;"></div><div class="r" style="left:447.70px;top:115.90px;width:8.2px;height:8.2px;border-radius:50%;background:#3b74d8;"></div><div class="t lt" style="left:463.24px;top:113.06px;font-size:14.1px;color:#55595d;letter-spacing:-0.593px;">Ready</div><div class="t lt" style="left:591.81px;top:113.06px;font-size:14.1px;color:#55595d;letter-spacing:0.056px;">group A</div><div class="t lt" style="left:746.54px;top:113.06px;font-size:14.1px;color:#55595d;letter-spacing:-0.253px;">Default</div><div class="t lt" style="left:876.23px;top:113.06px;font-size:14.1px;color:#55595d;letter-spacing:-0.129px;">100%</div><div class="t lt" style="left:1016.33px;top:113.06px;font-size:14.1px;color:#55595d;letter-spacing:0.411px;">13/03/2023 07:1...</div><div class="t lt" style="left:1171.78px;top:113.06px;font-size:14.1px;color:#55595d;letter-spacing:0.492px;">4/88064 MB</div><div class="r" style="left:120px;top:96px;width:311px;height:47px;overflow:hidden;"><div class="r" style="left:13.70px;top:19.90px;width:8.2px;height:8.2px;border-radius:50%;background:#3b74d8;"></div><div class="t semi" style="left:29.88px;top:15.64px;font-size:14.6px;color:#4b4f53;letter-spacing:0.465px;">cloud_i-0f72a9a2e88b666e8</div><div class="r" style="left:233.10px;top:14.20px;width:73.4px;height:17.6px;border:1px solid #a05ef0;border-radius:9px;box-sizing:border-box;"></div><svg class="r" style="left:243.10000000000002px;top:16.49999999999999px;" width="17" height="13" viewBox="0 0 17 13"><path d="M4.5 11.3 H12.6 C14.3 11.3 15.3 10.2 15.3 8.7 C15.3 7.2 14.2 6.1 12.6 6.1 C12.4 6.1 12.2 6.1 12 6.2 C11.2 3.2 9.2 1.3 6.8 1.3 C3.6 1.3 1.4 3.8 1.4 6.6 C1.4 9.2 2.6 11.3 4.5 11.3 Z" fill="none" stroke="#4a4e52" stroke-width="1.5"/></svg><div class="t med" style="left:263.67px;top:17.53px;font-size:11.3px;color:#4a4e52;letter-spacing:0.165px;">Helper</div></div><div class="r" style="left:16.30000000000001px;top:160.0px;width:15.5px;height:15.5px;border:2px solid #4b4f52;border-radius:2px;box-sizing:border-box;"></div><div class="r" style="left:447.70px;top:163.90px;width:8.2px;height:8.2px;border-radius:50%;background:#3b74d8;"></div><div class="t lt" style="left:463.24px;top:161.06px;font-size:14.1px;color:#55595d;letter-spacing:-0.593px;">Ready</div><div class="t lt" style="left:591.81px;top:161.06px;font-size:14.1px;color:#55595d;letter-spacing:0.056px;">group A</div><div class="t lt" style="left:746.54px;top:161.06px;font-size:14.1px;color:#55595d;letter-spacing:-0.253px;">Default</div><div class="t lt" style="left:876.64px;top:161.06px;font-size:14.1px;color:#55595d;letter-spacing:-0.579px;">99%</div><div class="t lt" style="left:1016.33px;top:161.06px;font-size:14.1px;color:#55595d;letter-spacing:0.411px;">13/03/2023 07:1...</div><div class="t lt" style="left:1171.78px;top:161.06px;font-size:14.1px;color:#55595d;letter-spacing:0.492px;">4/88064 MB</div><div class="r" style="left:120px;top:144px;width:311px;height:47px;overflow:hidden;"><div class="r" style="left:13.70px;top:19.90px;width:8.2px;height:8.2px;border-radius:50%;background:#3b74d8;"></div><div class="t semi" style="left:29.88px;top:15.64px;font-size:14.6px;color:#4b4f53;letter-spacing:0.573px;">cloud_i-0d6441d144f95ab28</div><div class="r" style="left:236.30px;top:14.20px;width:73.4px;height:17.6px;border:1px solid #a05ef0;border-radius:9px;box-sizing:border-box;"></div><svg class="r" style="left:246.29999999999995px;top:16.500000000000046px;" width="17" height="13" viewBox="0 0 17 13"><path d="M4.5 11.3 H12.6 C14.3 11.3 15.3 10.2 15.3 8.7 C15.3 7.2 14.2 6.1 12.6 6.1 C12.4 6.1 12.2 6.1 12 6.2 C11.2 3.2 9.2 1.3 6.8 1.3 C3.6 1.3 1.4 3.8 1.4 6.6 C1.4 9.2 2.6 11.3 4.5 11.3 Z" fill="none" stroke="#4a4e52" stroke-width="1.5"/></svg><div class="t med" style="left:266.87px;top:17.53px;font-size:11.3px;color:#4a4e52;letter-spacing:0.165px;">Helper</div></div><div class="r" style="left:16.30000000000001px;top:208.0px;width:15.5px;height:15.5px;border:2px solid #4b4f52;border-radius:2px;box-sizing:border-box;"></div><div class="r" style="left:447.70px;top:211.90px;width:8.2px;height:8.2px;border-radius:50%;background:#3b74d8;"></div><div class="t lt" style="left:463.24px;top:209.06px;font-size:14.1px;color:#55595d;letter-spacing:-0.593px;">Ready</div><div class="t lt" style="left:591.81px;top:209.06px;font-size:14.1px;color:#55595d;letter-spacing:0.056px;">group A</div><div class="t lt" style="left:746.54px;top:209.06px;font-size:14.1px;color:#55595d;letter-spacing:-0.253px;">Default</div><div class="t lt" style="left:876.69px;top:209.06px;font-size:14.1px;color:#55595d;letter-spacing:-0.603px;">89%</div><div class="t lt" style="left:1016.33px;top:209.06px;font-size:14.1px;color:#55595d;letter-spacing:0.411px;">13/03/2023 07:1...</div><div class="t lt" style="left:1171.78px;top:209.06px;font-size:14.1px;color:#55595d;letter-spacing:0.492px;">4/88064 MB</div><div class="r" style="left:120px;top:192px;width:311px;height:47px;overflow:hidden;"><div class="r" style="left:13.70px;top:19.90px;width:8.2px;height:8.2px;border-radius:50%;background:#3b74d8;"></div><div class="t semi" style="left:29.88px;top:15.64px;font-size:14.6px;color:#4b4f53;letter-spacing:0.543px;">cloud_i-0b0451669c49cbdee</div><div class="r" style="left:238.00px;top:14.20px;width:73.4px;height:17.6px;border:1px solid #a05ef0;border-radius:9px;box-sizing:border-box;"></div><svg class="r" style="left:248px;top:16.500000000000046px;" width="17" height="13" viewBox="0 0 17 13"><path d="M4.5 11.3 H12.6 C14.3 11.3 15.3 10.2 15.3 8.7 C15.3 7.2 14.2 6.1 12.6 6.1 C12.4 6.1 12.2 6.1 12 6.2 C11.2 3.2 9.2 1.3 6.8 1.3 C3.6 1.3 1.4 3.8 1.4 6.6 C1.4 9.2 2.6 11.3 4.5 11.3 Z" fill="none" stroke="#4a4e52" stroke-width="1.5"/></svg><div class="t med" style="left:268.57px;top:17.53px;font-size:11.3px;color:#4a4e52;letter-spacing:0.165px;">Helper</div></div><div class="r" style="left:16.30000000000001px;top:256.0px;width:15.5px;height:15.5px;border:2px solid #4b4f52;border-radius:2px;box-sizing:border-box;"></div><div class="r" style="left:447.70px;top:259.90px;width:8.2px;height:8.2px;border-radius:50%;background:#3b74d8;"></div><div class="t lt" style="left:463.24px;top:257.06px;font-size:14.1px;color:#55595d;letter-spacing:-0.593px;">Ready</div><div class="t lt" style="left:746.54px;top:257.06px;font-size:14.1px;color:#55595d;letter-spacing:-0.253px;">Default</div><div class="t lt" style="left:876.64px;top:257.06px;font-size:14.1px;color:#55595d;letter-spacing:-0.579px;">99%</div><div class="t lt" style="left:1016.33px;top:257.06px;font-size:14.1px;color:#55595d;letter-spacing:0.411px;">13/03/2023 07:1...</div><div class="t lt" style="left:1171.78px;top:257.06px;font-size:14.1px;color:#55595d;letter-spacing:0.492px;">4/88064 MB</div><div class="r" style="left:120px;top:240px;width:311px;height:47px;overflow:hidden;"><div class="r" style="left:13.70px;top:19.90px;width:8.2px;height:8.2px;border-radius:50%;background:#3b74d8;"></div><div class="t semi" style="left:29.88px;top:15.64px;font-size:14.6px;color:#4b4f53;letter-spacing:0.529px;">cloud_i-0ab91e098db759458</div><div class="r" style="left:239.00px;top:14.20px;width:73.4px;height:17.6px;border:1px solid #a05ef0;border-radius:9px;box-sizing:border-box;"></div><svg class="r" style="left:249px;top:16.500000000000046px;" width="17" height="13" viewBox="0 0 17 13"><path d="M4.5 11.3 H12.6 C14.3 11.3 15.3 10.2 15.3 8.7 C15.3 7.2 14.2 6.1 12.6 6.1 C12.4 6.1 12.2 6.1 12 6.2 C11.2 3.2 9.2 1.3 6.8 1.3 C3.6 1.3 1.4 3.8 1.4 6.6 C1.4 9.2 2.6 11.3 4.5 11.3 Z" fill="none" stroke="#4a4e52" stroke-width="1.5"/></svg><div class="t med" style="left:269.57px;top:17.53px;font-size:11.3px;color:#4a4e52;letter-spacing:0.165px;">Helper</div></div><div class="r" style="left:16.30000000000001px;top:304.0px;width:15.5px;height:15.5px;border:2px solid #4b4f52;border-radius:2px;box-sizing:border-box;"></div><div class="r" style="left:447.70px;top:307.90px;width:8.2px;height:8.2px;border-radius:50%;background:#3b74d8;"></div><div class="t lt" style="left:463.24px;top:305.06px;font-size:14.1px;color:#55595d;letter-spacing:-0.593px;">Ready</div><div class="t lt" style="left:746.54px;top:305.06px;font-size:14.1px;color:#55595d;letter-spacing:-0.253px;">Default</div><div class="t lt" style="left:876.58px;top:305.06px;font-size:14.1px;color:#55595d;letter-spacing:-0.551px;">68%</div><div class="t lt" style="left:1016.33px;top:305.06px;font-size:14.1px;color:#55595d;letter-spacing:0.411px;">13/03/2023 07:1...</div><div class="t lt" style="left:1171.78px;top:305.06px;font-size:14.1px;color:#55595d;letter-spacing:0.492px;">4/88064 MB</div><div class="r" style="left:120px;top:288px;width:311px;height:47px;overflow:hidden;"><div class="r" style="left:13.70px;top:19.90px;width:8.2px;height:8.2px;border-radius:50%;background:#3b74d8;"></div><div class="t semi" style="left:29.88px;top:15.64px;font-size:14.6px;color:#4b4f53;letter-spacing:0.402px;">cloud_i-0aae8883239733a09</div><div class="r" style="left:236.00px;top:14.20px;width:73.4px;height:17.6px;border:1px solid #a05ef0;border-radius:9px;box-sizing:border-box;"></div><svg class="r" style="left:246px;top:16.500000000000046px;" width="17" height="13" viewBox="0 0 17 13"><path d="M4.5 11.3 H12.6 C14.3 11.3 15.3 10.2 15.3 8.7 C15.3 7.2 14.2 6.1 12.6 6.1 C12.4 6.1 12.2 6.1 12 6.2 C11.2 3.2 9.2 1.3 6.8 1.3 C3.6 1.3 1.4 3.8 1.4 6.6 C1.4 9.2 2.6 11.3 4.5 11.3 Z" fill="none" stroke="#4a4e52" stroke-width="1.5"/></svg><div class="t med" style="left:266.57px;top:17.53px;font-size:11.3px;color:#4a4e52;letter-spacing:0.165px;">Helper</div></div><div class="r" style="left:16.30000000000001px;top:352.0px;width:15.5px;height:15.5px;border:2px solid #4b4f52;border-radius:2px;box-sizing:border-box;"></div><div class="r" style="left:447.70px;top:355.90px;width:8.2px;height:8.2px;border-radius:50%;background:#3b74d8;"></div><div class="t lt" style="left:463.24px;top:353.06px;font-size:14.1px;color:#55595d;letter-spacing:-0.593px;">Ready</div><div class="t lt" style="left:746.54px;top:353.06px;font-size:14.1px;color:#55595d;letter-spacing:-0.253px;">Default</div><div class="t lt" style="left:876.64px;top:353.06px;font-size:14.1px;color:#55595d;letter-spacing:-0.579px;">99%</div><div class="t lt" style="left:1016.33px;top:353.06px;font-size:14.1px;color:#55595d;letter-spacing:0.411px;">13/03/2023 07:1...</div><div class="t lt" style="left:1171.78px;top:353.06px;font-size:14.1px;color:#55595d;letter-spacing:0.492px;">4/88064 MB</div><div class="r" style="left:120px;top:336px;width:311px;height:47px;overflow:hidden;"><div class="r" style="left:13.70px;top:19.90px;width:8.2px;height:8.2px;border-radius:50%;background:#3b74d8;"></div><div class="t semi" style="left:29.88px;top:15.64px;font-size:14.6px;color:#4b4f53;letter-spacing:0.552px;">cloud_i-08e973f74ed290867</div><div class="r" style="left:236.00px;top:14.20px;width:73.4px;height:17.6px;border:1px solid #a05ef0;border-radius:9px;box-sizing:border-box;"></div><svg class="r" style="left:246px;top:16.500000000000046px;" width="17" height="13" viewBox="0 0 17 13"><path d="M4.5 11.3 H12.6 C14.3 11.3 15.3 10.2 15.3 8.7 C15.3 7.2 14.2 6.1 12.6 6.1 C12.4 6.1 12.2 6.1 12 6.2 C11.2 3.2 9.2 1.3 6.8 1.3 C3.6 1.3 1.4 3.8 1.4 6.6 C1.4 9.2 2.6 11.3 4.5 11.3 Z" fill="none" stroke="#4a4e52" stroke-width="1.5"/></svg><div class="t med" style="left:266.57px;top:17.53px;font-size:11.3px;color:#4a4e52;letter-spacing:0.165px;">Helper</div></div><div class="r" style="left:16.30000000000001px;top:400.0px;width:15.5px;height:15.5px;border:2px solid #4b4f52;border-radius:2px;box-sizing:border-box;"></div><div class="r" style="left:447.70px;top:403.90px;width:8.2px;height:8.2px;border-radius:50%;background:#3b74d8;"></div><div class="t lt" style="left:463.24px;top:401.06px;font-size:14.1px;color:#55595d;letter-spacing:-0.593px;">Ready</div><div class="t lt" style="left:746.54px;top:401.06px;font-size:14.1px;color:#55595d;letter-spacing:-0.253px;">Default</div><div class="t lt" style="left:876.69px;top:401.06px;font-size:14.1px;color:#55595d;letter-spacing:-0.603px;">82%</div><div class="t lt" style="left:1016.33px;top:401.06px;font-size:14.1px;color:#55595d;letter-spacing:0.411px;">13/03/2023 07:1...</div><div class="t lt" style="left:1171.78px;top:401.06px;font-size:14.1px;color:#55595d;letter-spacing:0.492px;">4/88064 MB</div><div class="r" style="left:120px;top:384px;width:311px;height:47px;overflow:hidden;"><div class="r" style="left:13.70px;top:19.90px;width:8.2px;height:8.2px;border-radius:50%;background:#3b74d8;"></div><div class="t semi" style="left:29.88px;top:15.64px;font-size:14.6px;color:#4b4f53;letter-spacing:0.548px;">cloud_i-07b3af9db85cb92cc</div><div class="r" style="left:233.00px;top:14.20px;width:73.4px;height:17.6px;border:1px solid #a05ef0;border-radius:9px;box-sizing:border-box;"></div><svg class="r" style="left:243px;top:16.500000000000046px;" width="17" height="13" viewBox="0 0 17 13"><path d="M4.5 11.3 H12.6 C14.3 11.3 15.3 10.2 15.3 8.7 C15.3 7.2 14.2 6.1 12.6 6.1 C12.4 6.1 12.2 6.1 12 6.2 C11.2 3.2 9.2 1.3 6.8 1.3 C3.6 1.3 1.4 3.8 1.4 6.6 C1.4 9.2 2.6 11.3 4.5 11.3 Z" fill="none" stroke="#4a4e52" stroke-width="1.5"/></svg><div class="t med" style="left:263.57px;top:17.53px;font-size:11.3px;color:#4a4e52;letter-spacing:0.165px;">Helper</div></div><div class="r" style="left:16.30000000000001px;top:448.0px;width:15.5px;height:15.5px;border:2px solid #4b4f52;border-radius:2px;box-sizing:border-box;"></div><div class="r" style="left:447.70px;top:451.90px;width:8.2px;height:8.2px;border-radius:50%;background:#3b74d8;"></div><div class="t lt" style="left:463.24px;top:449.06px;font-size:14.1px;color:#55595d;letter-spacing:-0.593px;">Ready</div><div class="t lt" style="left:746.54px;top:449.06px;font-size:14.1px;color:#55595d;letter-spacing:-0.253px;">Default</div><div class="t lt" style="left:876.64px;top:449.06px;font-size:14.1px;color:#55595d;letter-spacing:-0.579px;">99%</div><div class="t lt" style="left:1016.33px;top:449.06px;font-size:14.1px;color:#55595d;letter-spacing:0.411px;">13/03/2023 07:1...</div><div class="t lt" style="left:1171.78px;top:449.06px;font-size:14.1px;color:#55595d;letter-spacing:0.492px;">4/88064 MB</div><div class="r" style="left:120px;top:432px;width:311px;height:47px;overflow:hidden;"><div class="r" style="left:13.70px;top:19.90px;width:8.2px;height:8.2px;border-radius:50%;background:#3b74d8;"></div><div class="t semi" style="left:29.88px;top:15.64px;font-size:14.6px;color:#4b4f53;letter-spacing:0.488px;">cloud_i-04bac907d105ab6b6</div><div class="r" style="left:238.20px;top:14.20px;width:73.4px;height:17.6px;border:1px solid #a05ef0;border-radius:9px;box-sizing:border-box;"></div><svg class="r" style="left:248.20000000000005px;top:16.500000000000046px;" width="17" height="13" viewBox="0 0 17 13"><path d="M4.5 11.3 H12.6 C14.3 11.3 15.3 10.2 15.3 8.7 C15.3 7.2 14.2 6.1 12.6 6.1 C12.4 6.1 12.2 6.1 12 6.2 C11.2 3.2 9.2 1.3 6.8 1.3 C3.6 1.3 1.4 3.8 1.4 6.6 C1.4 9.2 2.6 11.3 4.5 11.3 Z" fill="none" stroke="#4a4e52" stroke-width="1.5"/></svg><div class="t med" style="left:268.77px;top:17.53px;font-size:11.3px;color:#4a4e52;letter-spacing:0.165px;">Helper</div></div></div><div class="r" style="left:179px;top:866px;width:1624px;height:1px;background:#dfe3e6;"></div><div class="t " style="left:189.99px;top:880.54px;font-size:12px;color:#3a3d40;letter-spacing:0.123px;">12 total agents</div><div class="t " style="left:1434.15px;top:880.37px;font-size:12.2px;color:#3a3d40;letter-spacing:0.24px;">Show:</div><div class="r" style="left:1474.4px;top:871.2px;width:71.2px;height:30px;border:1px solid #d6dadd;border-radius:3px;box-sizing:border-box;background:#fff;"></div><div class="t " style="left:1483.40px;top:879.48px;font-size:13.6px;color:#222;">50</div><svg class="r" style="left:1522.5px;top:883.5px;" width="10" height="7" viewBox="0 0 10 7"><path d="M1 1 L5.0 5 L9 1" fill="none" stroke="#333" stroke-width="1.6"/></svg><svg class="r" style="left:1726px;top:879px;" width="10" height="14" viewBox="0 0 10 14"><path d="M7.5 2.5 L3 7 L7.5 11.5" fill="none" stroke="#a6aaad" stroke-width="1.4"/></svg><div class="r" style="left:1742.90px;top:876.20px;width:20px;height:20px;border-radius:50%;background:#4e5255;"></div><div class="t med" style="left:1749.20px;top:880.22px;font-size:12.5px;color:#fff;">1</div><svg class="r" style="left:1769px;top:879px;" width="10" height="14" viewBox="0 0 10 14"><path d="M2.5 2.5 L7 7 L2.5 11.5" fill="none" stroke="#a6aaad" stroke-width="1.4"/></svg>
</body></html>
